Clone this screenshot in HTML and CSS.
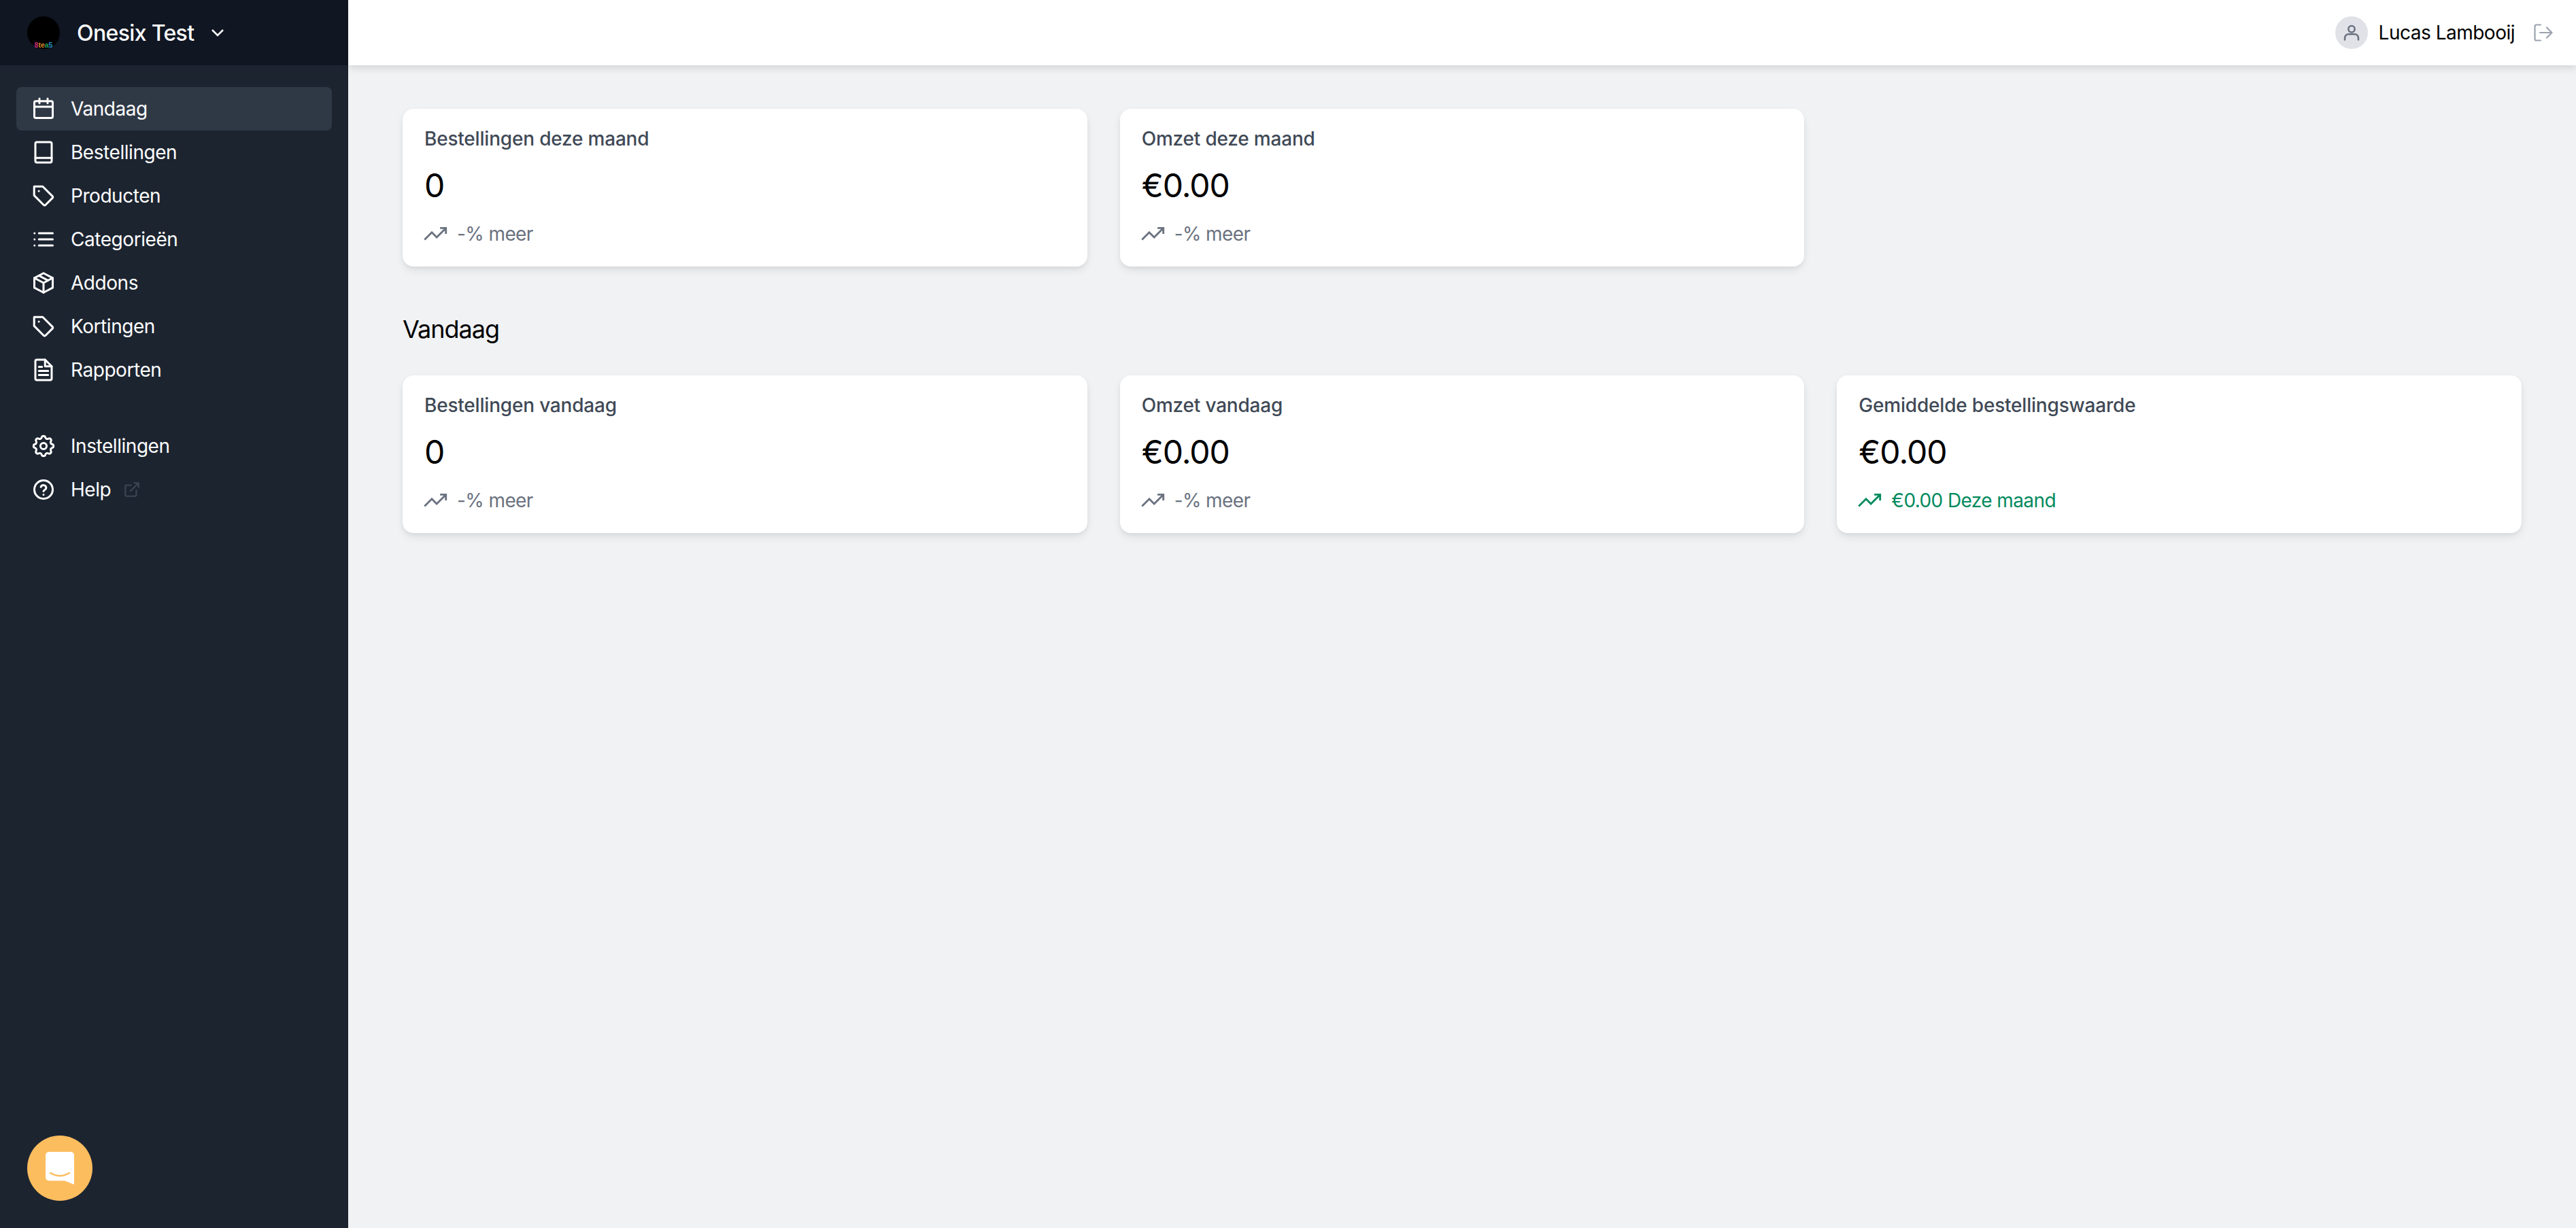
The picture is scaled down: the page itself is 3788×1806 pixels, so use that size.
FILE: index.html
```html
<!DOCTYPE html>
<html lang="nl">
<head>
    <meta charset="UTF-8">
    <meta name="viewport" content="width=device-width, initial-scale=1.0">
    <title>Onesix Test - Vandaag</title>
    <link rel="stylesheet" href="styles.css">
</head>
<body>
    <aside class="sidebar">
        <div class="brand">
            <div class="brand-logo">
                <span class="logo-text"><span class="c-pink">8</span><span class="c-orange">te</span><span class="c-green">a</span><span class="c-blue">5</span></span>
            </div>
            <span class="brand-name">Onesix Test</span>
            <svg class="brand-chevron" viewBox="0 0 20 12"><path d="M2 2l8 8 8-8"/></svg>
        </div>

        <nav class="nav">
            <a class="nav-item active">
                <svg class="icon" viewBox="0 0 24 24"><rect x="3" y="4.5" width="18" height="16.5" rx="1.5"/><path d="M3 10h18M8 2v4.5M16 2v4.5"/></svg>
                Vandaag
            </a>
            <a class="nav-item">
                <svg class="icon" viewBox="0 0 24 24"><rect x="4" y="2" width="16" height="20" rx="1.5"/><path d="M4 17.5h16"/></svg>
                Bestellingen
            </a>
            <a class="nav-item">
                <svg class="icon" viewBox="0 0 24 24"><path d="M2.8 2.8h8.4l9.6 9.6a1.2 1.2 0 010 1.7l-6.9 6.9a1.2 1.2 0 01-1.7 0l-9.4-9.4z"/><path d="M7.4 7.4h.01"/></svg>
                Producten
            </a>
            <a class="nav-item">
                <svg class="icon" viewBox="0 0 24 24"><path d="M7.5 6H21M7.5 12H21M7.5 18H21M3.2 6h.01M3.2 12h.01M3.2 18h.01"/></svg>
                Categorieën
            </a>
            <a class="nav-item">
                <svg class="icon" viewBox="0 0 24 24"><path d="M12 2.5l9 4.7v9.6l-9 4.7-9-4.7V7.2z"/><path d="M3 7.2l9 4.8 9-4.8M12 12v9.5M7.5 4.9l9 4.8"/></svg>
                Addons
            </a>
            <a class="nav-item">
                <svg class="icon" viewBox="0 0 24 24"><path d="M2.8 2.8h8.4l9.6 9.6a1.2 1.2 0 010 1.7l-6.9 6.9a1.2 1.2 0 01-1.7 0l-9.4-9.4z"/><path d="M7.4 7.4h.01"/></svg>
                Kortingen
            </a>
            <a class="nav-item">
                <svg class="icon" viewBox="0 0 24 24"><path d="M13.5 2H5.5A1.5 1.5 0 004 3.5v17A1.5 1.5 0 005.5 22h13a1.5 1.5 0 001.5-1.5V8.5z"/><path d="M13.5 2v6.5H20M7.5 9h3M7.5 13h9M7.5 17h9"/></svg>
                Rapporten
            </a>
        </nav>

        <nav class="nav nav-bottom">
            <a class="nav-item">
                <svg class="icon icon-gear" viewBox="1 1 22 22"><path d="M10.325 4.317c.426-1.756 2.924-1.756 3.35 0a1.724 1.724 0 002.573 1.066c1.543-.94 3.31.826 2.37 2.37a1.724 1.724 0 001.065 2.572c1.756.426 1.756 2.924 0 3.35a1.724 1.724 0 00-1.066 2.573c.94 1.543-.826 3.31-2.37 2.37a1.724 1.724 0 00-2.572 1.065c-.426 1.756-2.924 1.756-3.35 0a1.724 1.724 0 00-2.573-1.066c-1.543.94-3.31-.826-2.37-2.37a1.724 1.724 0 00-1.065-2.572c-1.756-.426-1.756-2.924 0-3.35a1.724 1.724 0 001.066-2.573c-.94-1.543.826-3.31 2.37-2.37.996.608 2.296.07 2.572-1.065z"/><circle cx="12" cy="12" r="2.8"/></svg>
                Instellingen
            </a>
            <a class="nav-item">
                <svg class="icon" viewBox="0 0 24 24"><circle cx="12" cy="12" r="9"/><path d="M9.4 9.4a2.7 2.7 0 015.2.9c0 1.8-2.6 2.3-2.6 3.4M12 17h.01"/></svg>
                Help
                <svg class="icon-external" viewBox="0 0 24 24"><path d="M18 13v6a2 2 0 01-2 2H5a2 2 0 01-2-2V8a2 2 0 012-2h6M15 3h6v6M10 14L21 3"/></svg>
            </a>
        </nav>
    </aside>

    <div class="content">
        <header class="topbar">
            <div class="avatar">
                <svg viewBox="0 0 24 24"><circle cx="12" cy="7.5" r="4"/><path d="M3.5 21v-2.5a4.5 4.5 0 014.5-4.5h8a4.5 4.5 0 014.5 4.5V21"/></svg>
            </div>
            <span class="user-name">Lucas Lambooij</span>
            <svg class="logout" viewBox="0 0 28 26"><path d="M10 1.5H3.5a2 2 0 00-2 2v19a2 2 0 002 2H10M9 13h17.5M19 5.5l7.5 7.5-7.5 7.5"/></svg>
        </header>

        <main class="page">
            <section class="card-grid">
                <div class="card">
                    <div class="card-title">Bestellingen deze maand</div>
                    <div class="card-value">0</div>
                    <div class="card-change">
                        <svg class="trend" viewBox="1 5 22 14"><path d="M23 6l-9.5 9.5-5-5L1 18M17 6h6v6"/></svg>
                        -% meer
                    </div>
                </div>
                <div class="card">
                    <div class="card-title">Omzet deze maand</div>
                    <div class="card-value">€0.00</div>
                    <div class="card-change">
                        <svg class="trend" viewBox="1 5 22 14"><path d="M23 6l-9.5 9.5-5-5L1 18M17 6h6v6"/></svg>
                        -% meer
                    </div>
                </div>
            </section>

            <h2 class="section-title">Vandaag</h2>

            <section class="card-grid">
                <div class="card">
                    <div class="card-title">Bestellingen vandaag</div>
                    <div class="card-value">0</div>
                    <div class="card-change">
                        <svg class="trend" viewBox="1 5 22 14"><path d="M23 6l-9.5 9.5-5-5L1 18M17 6h6v6"/></svg>
                        -% meer
                    </div>
                </div>
                <div class="card">
                    <div class="card-title">Omzet vandaag</div>
                    <div class="card-value">€0.00</div>
                    <div class="card-change">
                        <svg class="trend" viewBox="1 5 22 14"><path d="M23 6l-9.5 9.5-5-5L1 18M17 6h6v6"/></svg>
                        -% meer
                    </div>
                </div>
                <div class="card">
                    <div class="card-title">Gemiddelde bestellingswaarde</div>
                    <div class="card-value">€0.00</div>
                    <div class="card-change positive">
                        <svg class="trend" viewBox="1 5 22 14"><path d="M23 6l-9.5 9.5-5-5L1 18M17 6h6v6"/></svg>
                        €0.00 Deze maand
                    </div>
                </div>
            </section>
        </main>
    </div>

    <button class="chat-button">
        <svg viewBox="0 0 42 48"><path d="M5 0h32a5 5 0 015 5v43l-14-5.5H5a5 5 0 01-5-5V5a5 5 0 015-5z"/><path class="smile" d="M7 31c9 5.5 19 5.5 28 0"/></svg>
    </button>
</body>
</html>
```

FILE: styles.css
```css
* {
    box-sizing: border-box;
}

body {
    font-family: 'Inter', 'Liberation Sans', sans-serif;
    background-color: #f0f2f4;
    color: #000;
    margin: 0;
    display: flex;
    height: 100vh;
    overflow: hidden;
}

/* Sidebar */
.sidebar {
    width: 512px;
    flex-shrink: 0;
    background-color: #1c2430;
    color: #fff;
}

.brand {
    height: 96px;
    background-color: #101622;
    display: flex;
    align-items: center;
    padding-left: 40px;
}

.brand-logo {
    width: 48px;
    height: 48px;
    border-radius: 50%;
    background-color: #000;
    display: flex;
    align-items: flex-end;
    justify-content: center;
}

.logo-text {
    font-family: 'Liberation Sans', sans-serif;
    font-size: 10.5px;
    line-height: 10px;
    font-weight: bold;
    margin-bottom: 1px;
}

.c-pink { color: #d0307a; }
.c-orange { color: #d98c28; }
.c-green { color: #1f9a5a; }
.c-blue { color: #2a90d0; }

.brand-name {
    font-size: 32px;
    font-weight: 500;
    letter-spacing: -0.65px;
    margin-left: 25px;
}

.brand-chevron {
    width: 20px;
    height: 12px;
    margin-left: 25px;
    fill: none;
    stroke: #fff;
    stroke-width: 2.5;
}

.nav {
    padding: 32px 24px 0;
}

.nav-bottom {
    padding-top: 48px;
}

.nav-item {
    height: 64px;
    display: flex;
    align-items: center;
    padding-left: 22px;
    border-radius: 8px;
    font-size: 28px;
    letter-spacing: -0.45px;
    color: #fff;
}

.nav-item.active {
    background-color: #2f3946;
}

.icon {
    width: 36px;
    height: 36px;
    margin-right: 22px;
    fill: none;
    stroke: #fff;
    stroke-width: 2;
    stroke-linecap: round;
    stroke-linejoin: round;
}

.icon-gear {
    stroke-width: 1.8;
}

.icon-external {
    width: 26px;
    height: 26px;
    margin-left: 18px;
    fill: none;
    stroke: #3c4552;
    stroke-width: 2;
    stroke-linecap: round;
    stroke-linejoin: round;
}

/* Top bar */
.content {
    flex: 1;
    min-width: 0;
}

.topbar {
    height: 96px;
    background-color: #fff;
    box-shadow: 0 3px 12px rgba(0, 0, 0, 0.14);
    display: flex;
    align-items: center;
    justify-content: flex-end;
    padding-right: 34px;
}

.avatar {
    width: 48px;
    height: 48px;
    border-radius: 50%;
    background-color: #e0e2e8;
    display: flex;
    align-items: center;
    justify-content: center;
}

.avatar svg {
    width: 28px;
    height: 28px;
    fill: none;
    stroke: #6b7280;
    stroke-width: 2.2;
    stroke-linecap: round;
}

.user-name {
    font-size: 28px;
    letter-spacing: -0.5px;
    margin-left: 16px;
}

.logout {
    width: 28px;
    height: 26px;
    margin-left: 28px;
    fill: none;
    stroke: #9ca3af;
    stroke-width: 2.2;
    stroke-linecap: round;
    stroke-linejoin: round;
}

/* Page */
.page {
    padding: 64px 80px;
}

.card-grid {
    display: grid;
    grid-template-columns: repeat(3, 1fr);
    gap: 48px;
}

.section-title {
    font-size: 36px;
    font-weight: 400;
    line-height: 56px;
    letter-spacing: -1px;
    margin: 64px 0 40px;
}

.card {
    background-color: #fff;
    border-radius: 16px;
    box-shadow: 0 6px 14px -2px rgba(0, 0, 0, 0.1), 0 2px 6px -1px rgba(0, 0, 0, 0.06);
    height: 232px;
    padding: 24px 32px;
}

.card-title {
    font-size: 28px;
    line-height: 40px;
    font-weight: 500;
    letter-spacing: -0.2px;
    color: #3f4956;
}

.card-value {
    font-size: 48px;
    line-height: 56px;
    letter-spacing: -1px;
    margin-top: 21px;
}

.card-change {
    font-size: 28px;
    line-height: 40px;
    letter-spacing: -0.6px;
    margin-top: 23px;
    color: #6b7280;
    display: flex;
    align-items: center;
}

.card-change.positive {
    color: #038a5e;
}

.trend {
    width: 32px;
    height: 20px;
    margin-right: 16px;
    overflow: visible;
    fill: none;
    stroke: currentColor;
    stroke-width: 2;
}

/* Chat */
.chat-button {
    position: fixed;
    left: 40px;
    bottom: 40px;
    width: 96px;
    height: 96px;
    border: none;
    border-radius: 50%;
    background-color: #fbbd5e;
    padding: 0;
    display: flex;
    align-items: center;
    justify-content: center;
}

.chat-button svg {
    width: 42px;
    height: 48px;
    fill: #fff;
}

.chat-button .smile {
    fill: none;
    stroke: #fbbd5e;
    stroke-width: 2.5;
    stroke-linecap: round;
}
```
